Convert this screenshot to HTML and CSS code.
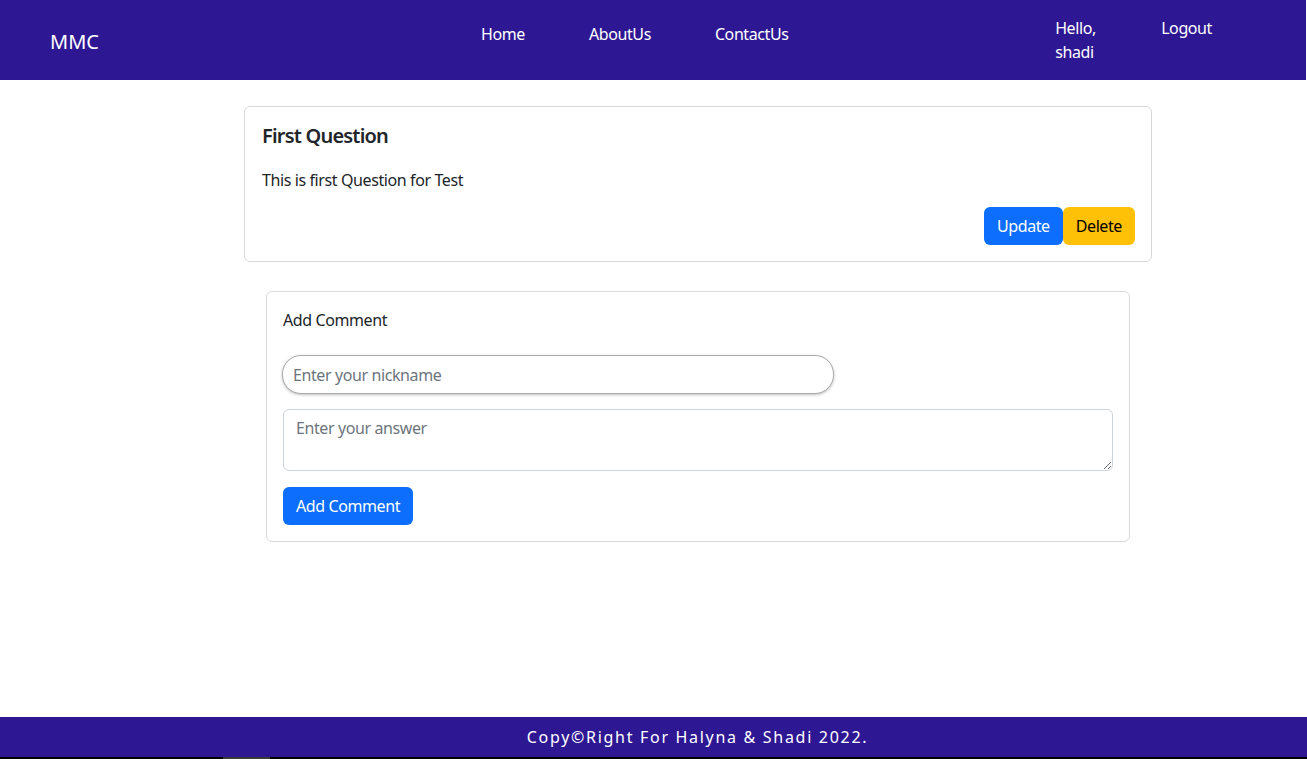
FILE: index.html
```html
<!DOCTYPE html>
<html lang="en">
<head>
<meta charset="utf-8">
<title>MMC</title>
<link rel="stylesheet" href="styles.css">
</head>
<body>
<div class="page">
  <header class="navbar">
    <div class="brand">MMC</div>
    <nav class="links">
      <a class="link">Home</a>
      <a class="link">AboutUs</a>
      <a class="link">ContactUs</a>
    </nav>
    <div class="user">
      <span class="hello">Hello,<br>shadi</span>
      <a class="link">Logout</a>
    </div>
  </header>

  <main class="content">
    <section class="card question">
      <h5 class="title">First Question</h5>
      <p class="text">This is first Question for Test</p>
      <div class="actions">
        <button class="btn btn-blue">Update</button>
        <button class="btn btn-yellow">Delete</button>
      </div>
    </section>

    <section class="card comment">
      <div class="comment-label">Add Comment</div>
      <input class="nick" type="text" placeholder="Enter your nickname">
      <textarea class="answer" placeholder="Enter your answer"></textarea>
      <div><button class="btn btn-blue">Add Comment</button></div>
    </section>
  </main>

  <footer class="footer">Copy©Right For Halyna &amp; Shadi 2022.</footer>
  <div class="bottom-bar"><span class="bottom-seg"></span></div>
</div>
</body>
</html>
```

FILE: styles.css
```css
* { box-sizing: border-box; }
html, body { margin: 0; padding: 0; }
body {
  font-family: "Segoe UI", "Noto Sans", "Open Sans", sans-serif;
  font-size: 16px;
  letter-spacing: -0.4px;
  color: #212529;
  background: #fff;
}
.page {
  display: flex;
  flex-direction: column;
  height: 759px;
}
.navbar {
  height: 80px;
  background: #2e1793;
  color: #fff;
  display: flex;
  align-items: flex-start;
  margin-right: 1px;
}
.brand {
  font-size: 20px;
  letter-spacing: 0;
  margin: 28px 0 0 50px;
  width: 431px;
}
.links {
  display: flex;
  padding-top: 22px;
}
.link {
  color: #fff;
  text-decoration: none;
  line-height: 24px;
}
.links .link:nth-child(1) { margin-right: 64px; }
.links .link:nth-child(2) { margin-right: 64px; }
.user {
  display: flex;
  margin-left: auto;
  margin-right: 94px;
  padding-top: 16px;
}
.hello {
  line-height: 24px;
  width: 106px;
}
.content {
  flex: 1;
  display: flex;
  flex-direction: column;
  align-items: flex-start;
}
.card {
  border: 1px solid #d9d9d9;
  border-radius: 6px;
  background: #fff;
  padding: 16px;
}
.question {
  width: 908px;
  margin: 26px 0 0 244px;
}
.title {
  margin: 0;
  font-size: 20px;
  font-weight: 600;
  letter-spacing: -0.8px;
  line-height: 24px;
  padding-top: 1px;
  padding-left: 1px;
}
.text {
  margin: 20px 0 15px;
  line-height: 24px;
  padding-left: 1px;
}
.actions {
  display: flex;
  justify-content: flex-end;
}
.btn {
  font-family: inherit;
  font-size: 16px;
  letter-spacing: -0.4px;
  line-height: 24px;
  border: 1px solid transparent;
  border-radius: 6px;
  padding: 6px 12px;
  height: 38px;
}
.btn-blue { background: #0d6efd; color: #fff; }
.btn-yellow { background: #ffc107; color: #000; }
.comment {
  width: 864px;
  margin: 29px 0 0 266px;
  display: flex;
  flex-direction: column;
  align-items: flex-start;
}
.comment-label {
  line-height: 24px;
  margin-bottom: 23px;
}
.nick {
  width: 552px;
  height: 39px;
  margin-left: -1px;
  border: 1px solid #aaa;
  border-radius: 19px;
  box-shadow: 0 1px 3px rgba(0,0,0,0.25);
  padding: 0 10px;
  font-family: inherit;
  font-size: 16px;
  letter-spacing: -0.4px;
  color: #212529;
  margin-bottom: 15px;
}
.nick::placeholder, .answer::placeholder { color: #6c757d; }
.answer {
  width: 830px;
  height: 62px;
  border: 1px solid #ced4da;
  border-radius: 6px;
  padding: 6px 12px;
  font-family: inherit;
  font-size: 16px;
  letter-spacing: -0.4px;
  line-height: 24px;
  margin: 0 0 16px;
  resize: vertical;
  display: block;
}
.footer {
  height: 40px;
  background: #2e1793;
  color: #fff;
  text-align: center;
  line-height: 40px;
  font-size: 16px;
  letter-spacing: 1.7px;
  padding-left: 88px;
}
.bottom-bar {
  height: 2px;
  background: #000;
  display: flex;
}
.bottom-seg {
  width: 47px;
  margin-left: 223px;
  background: #3a3a3a;
}
```
